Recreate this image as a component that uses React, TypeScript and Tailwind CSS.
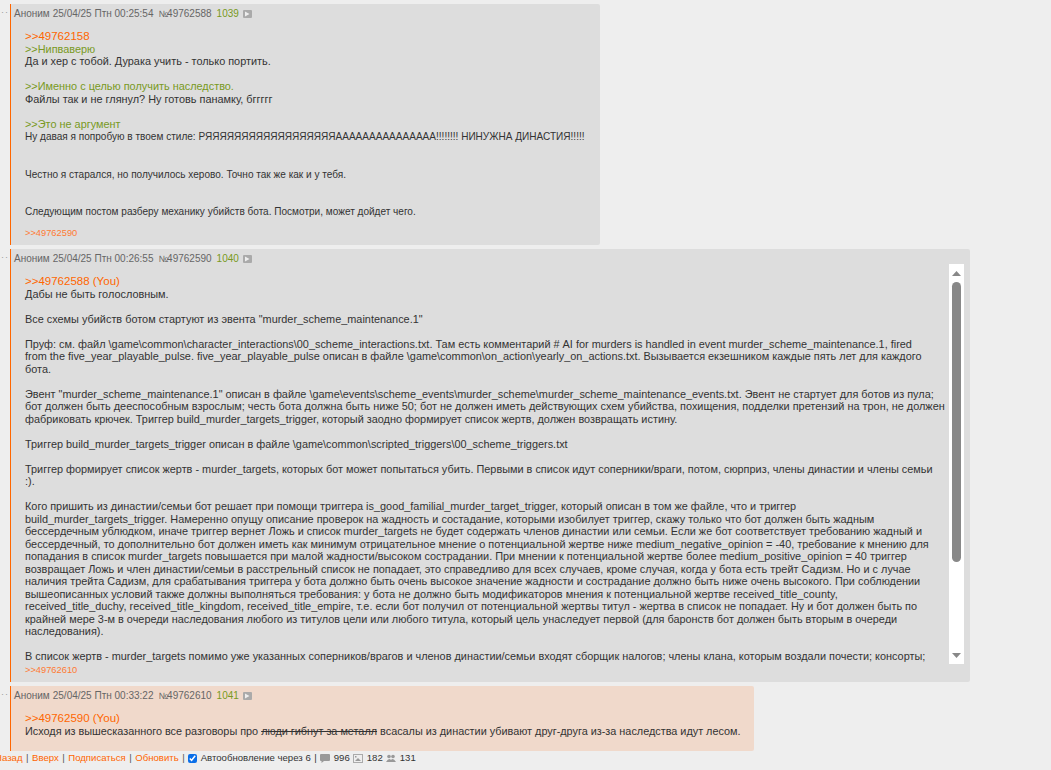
const POST1 = [
  { t: "link", s: ">>49762158" },
  { t: "quote", s: ">>Нипваверю" },
  { t: "text", s: "Да и хер с тобой. Дурака учить - только портить." },
  { t: "text", s: "" },
  { t: "quote", s: ">>Именно с целью получить наследство." },
  { t: "text", s: "Файлы так и не глянул? Ну готовь панамку, бггггг" },
  { t: "text", s: "" },
  { t: "quote", s: ">>Это не аргумент" },
  { t: "small", s: "Ну давая я попробую в твоем стиле: РЯЯЯЯЯЯЯЯЯЯЯЯЯЯЯЯЯЯААААААААААААААА!!!!!!!! НИНУЖНА ДИНАСТИЯ!!!!!" },
  { t: "text", s: "" },
  { t: "text", s: "" },
  { t: "small", s: "Честно я старался, но получилось херово. Точно так же как и у тебя." },
  { t: "text", s: "" },
  { t: "text", s: "" },
  { t: "small", s: "Следующим постом разберу механику убийств бота. Посмотри, может дойдет чего." },
];

const POST2 = [
  "Дабы не быть голословным.",
  "",
  'Все схемы убийств ботом стартуют из эвента "murder_scheme_maintenance.1"',
  "",
  "Пруф: см. файл \\game\\common\\character_interactions\\00_scheme_interactions.txt. Там есть комментарий # AI for murders is handled in event murder_scheme_maintenance.1, fired",
  "from the five_year_playable_pulse. five_year_playable_pulse описан в файле \\game\\common\\on_action\\yearly_on_actions.txt. Вызывается екзешником каждые пять лет для каждого",
  "бота.",
  "",
  'Эвент "murder_scheme_maintenance.1" описан в файле \\game\\events\\scheme_events\\murder_scheme\\murder_scheme_maintenance_events.txt. Эвент не стартует для ботов из пула;',
  "бот должен быть дееспособным взрослым; честь бота должна быть ниже 50; бот не должен иметь действующих схем убийства, похищения, подделки претензий на трон, не должен",
  "фабриковать крючек. Триггер build_murder_targets_trigger, который заодно формирует список жертв, должен возвращать истину.",
  "",
  "Триггер build_murder_targets_trigger описан в файле \\game\\common\\scripted_triggers\\00_scheme_triggers.txt",
  "",
  "Триггер формирует список жертв - murder_targets, которых бот может попытаться убить. Первыми в список идут соперники/враги, потом, сюрприз, члены династии и члены семьи",
  ":).",
  "",
  "Кого пришить из династии/семьи бот решает при помощи триггера is_good_familial_murder_target_trigger, который описан в том же файле, что и триггер",
  "build_murder_targets_trigger. Намеренно опущу описание проверок на жадность и состадание, которыми изобилует триггер, скажу только что бот должен быть жадным",
  "бессердечным ублюдком, иначе триггер вернет Ложь и список murder_targets не будет содержать членов династии или семьи. Если же бот соответствует требованию жадный и",
  "бессердечный, то дополнительно бот должен иметь как минимум отрицательное мнение о потенциальной жертве ниже medium_negative_opinion = -40, требование к мнению для",
  "попадания в список murder_targets повышается при малой жадности/высоком сострадании. При мнении к потенциальной жертве более medium_positive_opinion = 40 триггер",
  "возвращает Ложь и член династии/семьи в расстрельный список не попадает, это справедливо для всех случаев, кроме случая, когда у бота есть трейт Садизм. Но и с лучае",
  "наличия трейта Садизм, для срабатывания триггера у бота должно быть очень высокое значение жадности и сострадание должно быть ниже очень высокого. При соблюдении",
  "вышеописанных условий также должны выполняться требования: у бота не должно быть модификаторов мнения к потенциальной жертве received_title_county,",
  "received_title_duchy, received_title_kingdom, received_title_empire, т.е. если бот получил от потенциальной жертвы титул - жертва в список не попадает. Ну и бот должен быть по",
  "крайней мере 3-м в очереди наследования любого из титулов цели или любого титула, который цель унаследует первой (для баронств бот должен быть вторым в очереди",
  "наследования).",
  "",
  "В список жертв - murder_targets помимо уже указанных соперников/врагов и членов династии/семьи входят сборщик налогов; члены клана, которым воздали почести; консорты;",
];

function Line({ children }: { children?: React.ReactNode }) {
  return <div className="h-[12.5px] whitespace-nowrap leading-[12.5px]">{children}</div>;
}

function PostHead({ date, num, idx }: { date: string; num: string; idx: string }) {
  return (
    <div className="flex h-[13px] items-center text-[10px] leading-[13px] text-[#666666]">
      <span>Аноним</span>
      <span className="ml-[3px]">{date}</span>
      <span className="ml-[5px]">
        <span className="text-[9px] tracking-[-1px]">№</span>
        {num}
      </span>
      <span className="ml-[5px] text-[#789922]">{idx}</span>
      <span className="ml-[4px] flex h-[8px] w-[9px] items-center justify-center rounded-[1px] bg-[#aaaaaa]">
        <svg viewBox="0 0 6 6" className="h-[6px] w-[6px]">
          <path d="M1 0.5 L5.5 3 L1 5.5 Z" fill="#eeeeee" />
        </svg>
      </span>
    </div>
  );
}

function Dots() {
  return <div className="absolute left-[1px] top-[5px] text-[9px] leading-[6px] tracking-[1px] text-[#999999]">··</div>;
}

function Reply({ num }: { num: string }) {
  return <div className="text-[9.3px] leading-[12px] text-[#ff7a33]">&gt;&gt;{num}</div>;
}

function Scrollbar() {
  return (
    <div className="flex h-[400px] w-[15px] shrink-0 flex-col items-center bg-white">
      <div className="flex h-[18px] w-full items-center justify-center">
        <svg viewBox="0 0 9 5" className="h-[5px] w-[9px]">
          <path d="M4.5 0 L9 5 L0 5 Z" fill="#888888" />
        </svg>
      </div>
      <div className="h-[280px] w-[9px] rounded-[5px] bg-[#888888]" />
      <div className="flex-1" />
      <div className="flex h-[18px] w-full items-center justify-center">
        <svg viewBox="0 0 9 5" className="h-[5px] w-[9px]">
          <path d="M0 0 L9 0 L4.5 5 Z" fill="#888888" />
        </svg>
      </div>
    </div>
  );
}

export default function App() {
  return (
    <div className="h-[770px] w-[1051px] overflow-hidden bg-[#eeeeee] pt-[4px] text-[10.9px] text-[#333333] [font-family:'Liberation_Sans',sans-serif]">
      {/* post 1039 */}
      <div className="relative mb-[4px] pl-[10px]">
        <Dots />
        <div className="h-[241px] w-[590px] rounded-r-[2px] border-l border-[#ff6600] bg-[#dddddd] pl-[3px] pt-[3px]">
          <PostHead date="25/04/25 Птн 00:25:54" num="49762588" idx="1039" />
          <div className="pl-[11px] pt-[10px]">
            {POST1.map((l, i) => (
              <Line key={i}>
                {l.t === "link" ? (
                  <span className="text-[11.5px] text-[#ff6600]">{l.s}</span>
                ) : l.t === "quote" ? (
                  <span className="text-[#789922]">{l.s}</span>
                ) : l.t === "small" ? (
                  <span className="text-[10.05px]">{l.s}</span>
                ) : (
                  l.s
                )}
              </Line>
            ))}
          </div>
          <div className="pl-[11px] pt-[9px]">
            <Reply num="49762590" />
          </div>
        </div>
      </div>

      {/* post 1040 */}
      <div className="relative mb-[4px] pl-[10px]">
        <Dots />
        <div className="h-[433px] w-[960px] rounded-r-[2px] border-l border-[#ff6600] bg-[#dddddd] pl-[3px] pt-[3px]">
          <PostHead date="25/04/25 Птн 00:26:55" num="49762590" idx="1040" />
          <div className="-mt-[1px] flex">
            <div className="h-[400px] w-[935px] overflow-hidden pl-[11px] pt-[11px]">
              <Line>
                <span className="text-[11.5px] text-[#ff6600]">&gt;&gt;49762588 (You)</span>
              </Line>
              {POST2.map((s, i) => (
                <Line key={i}>{s}</Line>
              ))}
            </div>
            <Scrollbar />
          </div>
          <div className="pl-[11px]">
            <Reply num="49762610" />
          </div>
        </div>
      </div>

      {/* post 1041 */}
      <div className="relative pl-[10px]">
        <Dots />
        <div className="h-[65px] w-[744px] rounded-r-[2px] border-l border-[#ff6600] bg-[#f0d9cb] pl-[3px] pt-[3px]">
          <PostHead date="25/04/25 Птн 00:33:22" num="49762610" idx="1041" />
          <div className="pl-[11px] pt-[10px] text-[10.85px]">
            <Line>
              <span className="text-[11.5px] text-[#ff6600]">&gt;&gt;49762590 (You)</span>
            </Line>
            <Line>
              Исходя из вышесказанного все разговоры про <span className="line-through">люди гибнут за металл</span> всасалы из династии убивают друг-друга из-за наследства идут лесом.
            </Line>
          </div>
        </div>
      </div>

      {/* bottom bar */}
      <div className="flex h-[14px] items-center gap-[3.5px] whitespace-nowrap text-[9.6px] text-[#ff6600]">
        <span className="-ml-[5px]">Назад</span>
        <span className="text-[#555555]">|</span>
        <span>Вверх</span>
        <span className="text-[#555555]">|</span>
        <span>Подписаться</span>
        <span className="text-[#555555]">|</span>
        <span>Обновить</span>
        <span className="text-[#555555]">|</span>
        <input type="checkbox" defaultChecked className="h-[9px] w-[9px] accent-[#0b6fe8]" />
        <span className="text-[#333333]">Автообновление через 6</span>
        <span className="text-[#333333]">|</span>
        <svg viewBox="0 0 10 9" className="h-[9px] w-[10px]">
          <path d="M1 0 H9 A1 1 0 0 1 10 1 V6 A1 1 0 0 1 9 7 H4 L1.5 9 V7 H1 A1 1 0 0 1 0 6 V1 A1 1 0 0 1 1 0 Z" fill="#999999" />
        </svg>
        <span className="text-[#333333]">996</span>
        <svg viewBox="0 0 10 9" className="h-[9px] w-[10px]">
          <rect x="0.5" y="0.5" width="9" height="8" fill="#eeeeee" stroke="#aaaaaa" />
          <path d="M2 7 L5 4 L8 7 Z" fill="#999999" />
          <rect x="2" y="2" width="1.5" height="1.5" fill="#999999" />
        </svg>
        <span className="text-[#333333]">182</span>
        <svg viewBox="0 0 10 9" className="h-[9px] w-[10px]">
          <circle cx="3" cy="2.5" r="1.8" fill="#999999" />
          <circle cx="7" cy="2.5" r="1.8" fill="#999999" />
          <path d="M0 8 Q3 3 5 6 Q7 3 10 8 Z" fill="#999999" />
        </svg>
        <span className="text-[#333333]">131</span>
      </div>
    </div>
  );
}
